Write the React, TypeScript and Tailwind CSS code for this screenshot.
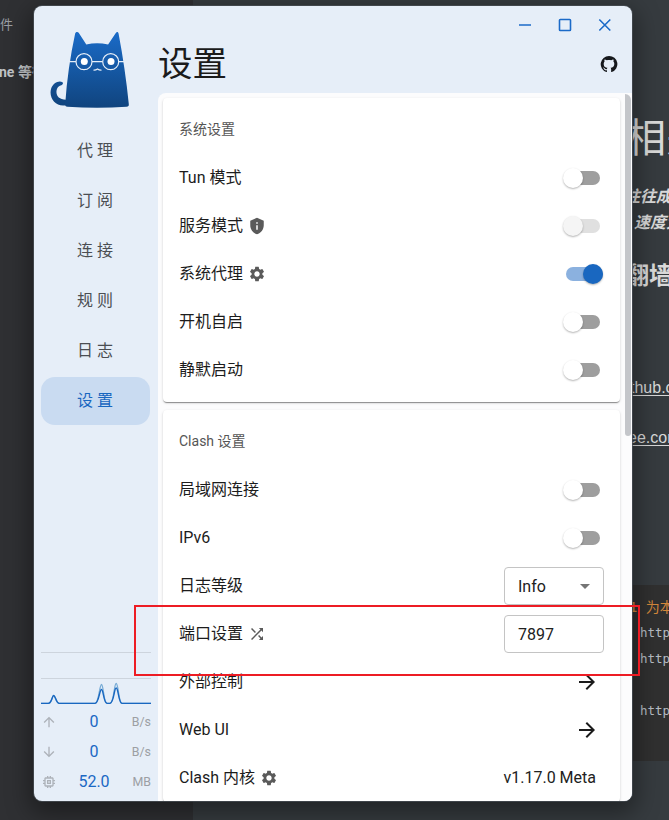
import type { ReactNode } from "react";
import {
  MdArrowDownward,
  MdArrowDropDown,
  MdArrowForward,
  MdArrowUpward,
  MdOutlineMemory,
  MdPrivacyTip,
  MdSettings,
  MdShuffle,
} from "react-icons/md";

const navItems = ["代理", "订阅", "连接", "规则", "日志", "设置"];

function CatLogo() {
  return (
    <svg className="ml-[16px] mt-px block" width="80" height="78" viewBox="0 0 80 78" fill="none">
      <defs>
        <linearGradient id="fur" x1="0" y1="0" x2="0" y2="1">
          <stop offset="0" stopColor="#1a6bc8" />
          <stop offset="1" stopColor="#10447e" />
        </linearGradient>
        <linearGradient id="tail" x1="0" y1="0" x2="0" y2="1">
          <stop offset="0" stopColor="#134f92" />
          <stop offset="1" stopColor="#10447e" />
        </linearGradient>
      </defs>
      <path
        d="M12.5 51.2C9 48.8 3.2 52 1.3 57C-2 67 6 76.5 16 74.2L16 68.8C9 68.5 6 65 6.5 60C7 56 9.5 54.6 11.4 54.2C13 53.6 13.4 52.2 12.5 51.2Z"
        fill="url(#tail)"
      />
      <path
        d="M25.1 2.8C25.6 .5 28 .5 29 2.2L36.3 13.4Q47 11 58.1 13.4L65.8 2C66.8 .4 68.2 .5 68.6 2.8C73 26 76.5 50 78.8 73C79 75 78.4 75.5 76.5 75.8C57 77.2 37 77.2 17.5 75.8C15.5 75.5 15 75 15.2 73C16.8 49 20.3 25 25.1 2.8Z"
        fill="url(#fur)"
      />
      <g stroke="#e6eef8" strokeWidth="1.2">
        <path d="M20 30.7h6M42 30.7h10.5M69 30.7h5" />
        <circle cx="34" cy="30.7" r="8" />
        <circle cx="60.7" cy="30.7" r="8" />
        <path d="M43.5 39.2q2.2 .2 4-1.2q1.8 1.4 4 1.2" />
      </g>
      <circle cx="34.3" cy="30.6" r="3.5" fill="white" />
      <circle cx="61" cy="30.6" r="3.5" fill="white" />
    </svg>
  );
}

function TrafficGraph() {
  return (
    <svg className="block" width="110" height="53" viewBox="0 0 110 53" fill="none">
      <path d="M0 .5H110M0 26.5H110" stroke="#cdd4dd" />
      <path
        d="M0 51.4H8C11 51 11 43.5 12.7 43.5S15 51 18 51.4H54C58 51 58.5 32.5 60.5 32.5S62.5 51 66 51.4H69C73 51 73 31.5 75.2 31.5S77.5 51 81 51.4H110"
        stroke="#78acd6"
        strokeWidth="1.3"
      />
      <path
        d="M0 51.4H7C11 51 11 43.5 12.7 43.5S15 51 18 51.4H54C58 51 58.5 37.5 60.5 37.5S62.5 51 66 51.4H69C73 51 73 36 75.2 36S77.5 51 81 51.4H110"
        stroke="#1967c0"
        strokeWidth="1.4"
      />
    </svg>
  );
}

function Stat({ icon, value, unit }: { icon: ReactNode; value: string; unit: string }) {
  return (
    <div className="flex h-[30px] items-center">
      <span className="w-4 text-[#adb2b9]">{icon}</span>
      <span className="flex-1 pl-2 text-center text-[16px] text-[#1b68c4]">{value}</span>
      <span className="w-[28px] text-right text-[12.4px] text-[#9c9fa4]">{unit}</span>
    </div>
  );
}

function Toggle({ state }: { state: "on" | "off" | "disabled" }) {
  if (state === "on") {
    return (
      <span className="mr-[1px] flex h-[14px] w-[37px] items-center justify-end rounded-full bg-[#8bb1df]">
        <span className="h-5 w-5 shrink-0 rounded-full bg-[#1967c0] shadow-[0_1px_2px_rgba(0,0,0,.3)]" />
      </span>
    );
  }
  const off = state === "off";
  return (
    <span
      className={`mr-1 flex h-[14px] w-[34px] items-center rounded-full ${off ? "bg-[#9e9e9e]" : "bg-[#e0e0e0]"}`}
    >
      <span
        className={`-ml-[3px] h-5 w-5 shrink-0 rounded-full shadow-[0_1px_2px_rgba(0,0,0,.3)] ${off ? "bg-white" : "bg-[#f5f5f5]"}`}
      />
    </span>
  );
}

function Row({ label, icon, children }: { label: string; icon?: ReactNode; children: ReactNode }) {
  return (
    <div className="flex h-12 items-center justify-between">
      <span className="flex items-center gap-[5px] text-[16px] leading-6 text-[#1c1c1c]">
        {label}
        {icon && <span className="text-[#5a5a5a]">{icon}</span>}
      </span>
      {children}
    </div>
  );
}

function Card({ title, children }: { title: string; children: ReactNode }) {
  return (
    <section className="rounded-[4px] bg-white px-4 pt-2 shadow-[0_2px_1px_-1px_rgba(0,0,0,.25),0_1px_1px_rgba(0,0,0,.18),0_1px_3px_rgba(0,0,0,.14)]">
      <h2 className="flex h-12 items-center pb-[2px] text-[14px] text-[#555]">{title}</h2>
      {children}
    </section>
  );
}

function BackgroundPage() {
  return (
    <div className="flex h-full">
      <div className="w-[193px] shrink-0 overflow-hidden bg-[#2f3033] pt-[15px] text-[#9b9fa3]">
        <p className="text-[13px] leading-5">件</p>
        <p className="-ml-[1px] mt-[27px] whitespace-nowrap text-[14px] font-bold leading-5 text-[#c0c3c6]">
          ne 等待
        </p>
      </div>
      <div className="flex flex-1 flex-col overflow-hidden bg-[#363b3f] pl-[437px] text-[#d9d9d9]">
        <div className="-ml-[4px] mt-[111px] w-[100px] whitespace-nowrap text-[40px] leading-[56px]">相关</div>
        <div className="-ml-[6px] mt-[17px] w-[100px] whitespace-nowrap text-[16px] font-bold italic leading-[26px]">
          往往成为
        </div>
        <div className="ml-[4px] w-[100px] whitespace-nowrap text-[16px] font-bold italic leading-[26px]">
          速度太
        </div>
        <div className="-ml-[5px] mt-5 w-[100px] whitespace-nowrap text-[24px] font-bold leading-10">翻墙</div>
        <div className="mt-[79px] w-[100px] whitespace-nowrap font-['Liberation_Sans'] text-[16px] leading-[26px] underline underline-offset-2">
          thub.com
        </div>
        <div className="-ml-[2px] mt-[24px] w-[100px] whitespace-nowrap font-['Liberation_Sans'] text-[16px] leading-[26px] underline underline-offset-2">
          ee.com
        </div>
        <div className="-ml-8 mt-[134px] h-[176px] bg-[#303030] pl-[42px] pt-[9px] font-['DejaVu_Sans_Mono','Noto_Sans_CJK_SC',monospace] text-[12.5px] leading-[26px] text-[#b5bcc3]">
          <p className="-ml-[11px] w-[100px] whitespace-nowrap text-[14px] text-[#d4873b]">1 为本</p>
          <p>http</p>
          <p>http</p>
          <p className="mt-[26px]">http</p>
        </div>
      </div>
    </div>
  );
}

function Sidebar() {
  return (
    <aside className="flex w-[124px] shrink-0 flex-col pt-6">
      <CatLogo />
      <nav className="ml-[7px] mt-[18px] flex w-[109px] flex-col gap-[2px]">
        {navItems.map((item) => (
          <div
            key={item}
            className={`flex h-12 items-center justify-center rounded-[14px] pl-[3px] text-[16px] tracking-[4px] ${
              item === "设置" ? "bg-[#c9dbf1] text-[#1967c0]" : "text-[#4b4e53]"
            }`}
          >
            {item}
          </div>
        ))}
      </nav>
      <div className="mb-[4px] ml-[7px] mt-auto w-[110px]">
        <TrafficGraph />
        <div className="mt-[2px]">
          <Stat icon={<MdArrowUpward size={16} />} value="0" unit="B/s" />
          <Stat icon={<MdArrowDownward size={16} />} value="0" unit="B/s" />
          <Stat icon={<MdOutlineMemory size={16} />} value="52.0" unit="MB" />
        </div>
      </div>
    </aside>
  );
}

function WindowControls() {
  return (
    <div className="flex h-[38px] items-center justify-end pr-5">
      <svg width="94" height="14" viewBox="0 0 94 14" fill="none" stroke="#1b6ac8" strokeWidth="1.6">
        <path d="M1 7h12" />
        <rect x="41.5" y="1.5" width="11" height="11" rx=".8" />
        <path d="M81.3 1.5l11 11M92.3 1.5l-11 11" />
      </svg>
    </div>
  );
}

function SettingsPanel() {
  return (
    <div className="flex min-h-0 flex-1 overflow-hidden rounded-tl-[8px] bg-[#fcfcfd]">
      <div className="ml-[5px] mr-[5px] mt-[5px] flex flex-1 flex-col gap-2">
        <Card title="系统设置">
          <Row label="Tun 模式"><Toggle state="off" /></Row>
          <Row label="服务模式" icon={<MdPrivacyTip size={18} />}><Toggle state="disabled" /></Row>
          <Row label="系统代理" icon={<MdSettings size={18} />}><Toggle state="on" /></Row>
          <Row label="开机自启"><Toggle state="off" /></Row>
          <Row label="静默启动"><Toggle state="off" /></Row>
          <div className="h-2" />
        </Card>
        <Card title="Clash 设置">
          <Row label="局域网连接"><Toggle state="off" /></Row>
          <Row label="IPv6"><Toggle state="off" /></Row>
          <Row label="日志等级">
            <span className="flex h-[38px] w-[100px] items-center justify-between rounded-[4px] border border-[#c4c4c4] pl-[13px] pr-[6px] text-[16px] text-[#212121]">
              <span className="pt-[2px]">Info</span>
              <MdArrowDropDown size={24} className="text-[#757575]" />
            </span>
          </Row>
          <Row label="端口设置" icon={<MdShuffle size={18} />}>
            <span className="flex h-[38px] w-[100px] items-center rounded-[4px] border border-[#c4c4c4] pl-[13px] pt-[2px] text-[16px] text-[#212121]">
              7897
            </span>
          </Row>
          <Row label="外部控制"><MdArrowForward size={24} className="mr-[5px] text-[#1b1b1b]" /></Row>
          <Row label="Web UI"><MdArrowForward size={24} className="mr-[5px] text-[#1b1b1b]" /></Row>
          <Row label="Clash 内核" icon={<MdSettings size={18} />}>
            <span className="mr-2 text-[16px] text-[#212121]">v1.17.0 Meta</span>
          </Row>
        </Card>
      </div>
      <div className="mr-[1px] mt-px h-[342px] w-[6px] rounded-b-[3px] rounded-tr-[6px] bg-[#c4c6ca]" />
    </div>
  );
}

export default function App() {
  return (
    <div className="relative h-[820px] w-[669px] overflow-hidden bg-[#303235] font-['Roboto','Noto_Sans_CJK_SC',sans-serif]">
      <BackgroundPage />
      <div className="absolute left-[34px] top-[6px] flex h-[795px] w-[598px] overflow-hidden rounded-[8px] bg-[#e6eef8] shadow-[0_0_0_1px_rgba(70,76,82,.8),0_8px_24px_4px_rgba(0,0,0,.4)]">
        <Sidebar />
        <main className="flex min-w-0 flex-1 flex-col">
          <WindowControls />
          <header className="flex h-[49px] items-center justify-between pr-[14px]">
            <h1 className="mt-[-9px] text-[34.5px] leading-[50px] text-[#1b1b1b]">设置</h1>
            <svg className="mb-[9px]" width="18" height="18" viewBox="0 0 24 24" fill="#16181c">
              <path d="M12 1.27a11 11 0 00-3.48 21.46c.55.09.73-.28.73-.55v-1.84c-3.03.64-3.67-1.46-3.67-1.46-.55-1.29-1.28-1.65-1.28-1.65-.92-.65.1-.65.1-.65 1.1 0 1.73 1.1 1.73 1.1.92 1.65 2.57 1.2 3.21.92a2 2 0 01.64-1.47c-2.47-.27-5.04-1.19-5.04-5.5 0-1.1.46-2.1 1.2-2.84a3.76 3.76 0 010-2.93s.91-.28 3.11 1.1c1.8-.49 3.7-.49 5.5 0 2.1-1.38 3.02-1.1 3.02-1.1a3.76 3.76 0 01.1 2.93c.83.74 1.2 1.74 1.2 2.94 0 4.21-2.57 5.13-5.04 5.4.45.37.82.92.82 2.02v3.03c0 .27.1.64.73.55A11 11 0 0012 1.27" />
            </svg>
          </header>
          <SettingsPanel />
        </main>
      </div>
      <div className="absolute left-[134px] top-[605px] h-[71px] w-[506px] border-2 border-[#ed1c24]" />
    </div>
  );
}
